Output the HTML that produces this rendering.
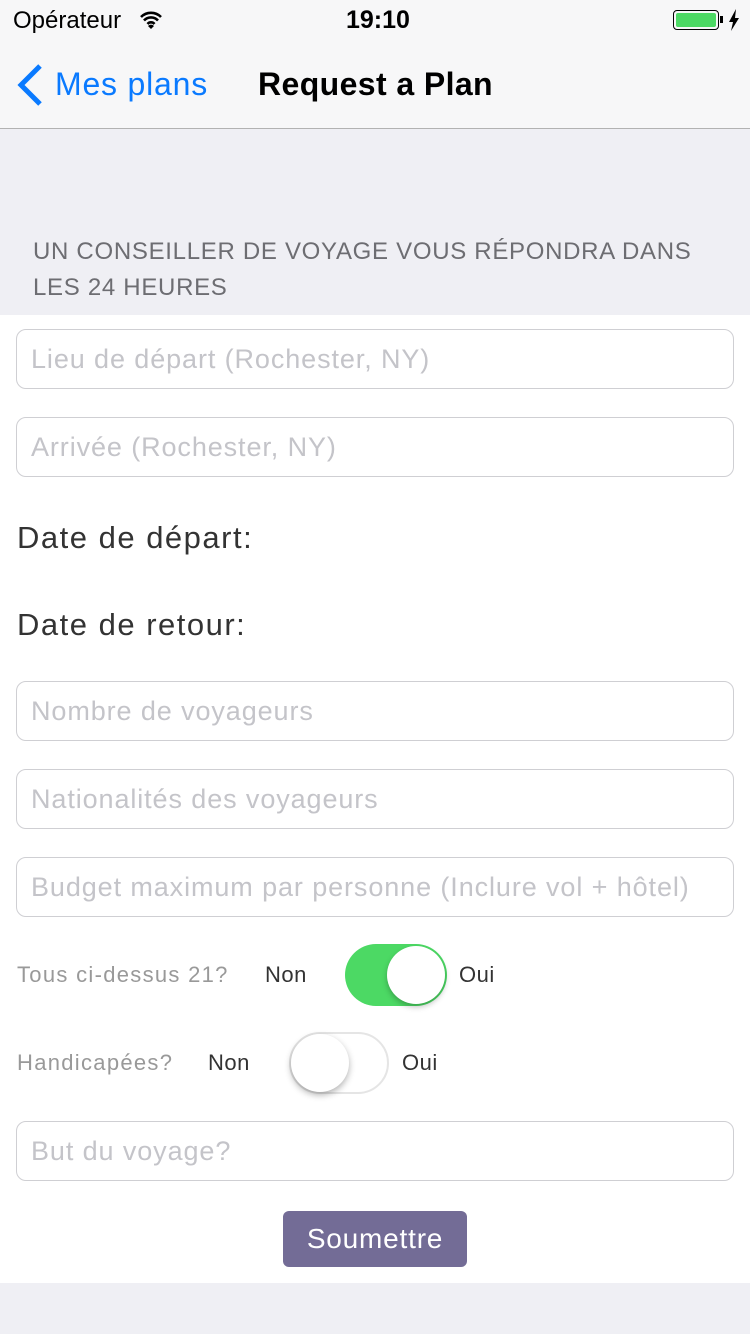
<html><head><style>
body{margin:0;width:750px;height:1334px;background:#efeff4;font-family:"Liberation Sans",sans-serif;position:relative;overflow:hidden}
.a{position:absolute;white-space:nowrap}
.in{position:absolute;left:16px;height:58px;border:1px solid #cfcfd3;border-radius:10px;background:#fff;font-size:27px;letter-spacing:0.9px;color:#c4c4c9;line-height:58px;box-sizing:content-box;padding-left:14px;width:702px}
.lbl{font-size:31px;letter-spacing:1.5px;color:#333}
.sm{font-size:22px;color:#333;letter-spacing:0.5px}
.gl{font-size:22px;color:#999;letter-spacing:1.3px}
</style></head><body>
<div class="a" style="left:0;top:0;width:750px;height:128px;background:#f7f7f8;border-bottom:1px solid #b2b2b2"></div>
<div class="a" style="left:13px;top:7px;font-size:24px">Opérateur</div>
<svg class="a" style="left:139px;top:10px" width="24" height="20" viewBox="0 0 24 20"><path d="M2 7a14 14 0 0 1 20 0M5 10.5a9.5 9.5 0 0 1 14 0M8.5 14a4.5 4.5 0 0 1 7 0" stroke="#000" stroke-width="2.6" fill="none"/><path d="M12 19l-3-3a4 4 0 0 1 6 0z"/></svg>
<div class="a" style="left:346px;top:6px;font-size:25px;font-weight:bold">19:10</div>
<div class="a" style="left:673px;top:10px;width:44px;height:18px;border:1.5px solid #000;border-radius:4px"><div style="margin:2px;height:14px;background:#4cd964;border-radius:2px"></div></div>
<div class="a" style="left:720px;top:16px;width:3px;height:7px;background:#000"></div>
<svg class="a" style="left:728px;top:9px" width="12" height="22" viewBox="0 0 12 22"><path d="M8 0L1 13h4l-2 9 8-13H7z"/></svg>
<svg class="a" style="left:16px;top:64px" width="28" height="42" viewBox="0 0 28 42"><path d="M24 2L5 21l19 19" stroke="#0a7aff" stroke-width="5" fill="none"/></svg>
<div class="a" style="left:55px;top:66px;font-size:32px;color:#0a7aff;letter-spacing:0.8px">Mes plans</div>
<div class="a" style="left:258px;top:66px;font-size:32px;font-weight:bold;letter-spacing:0.4px">Request a Plan</div>
<div class="a" style="left:33px;top:234px;font-size:24px;color:#6d6d72;line-height:36px;letter-spacing:0.7px">UN CONSEILLER DE VOYAGE VOUS RÉPONDRA DANS<br>LES 24 HEURES</div>
<div class="a" style="left:0;top:315px;width:750px;height:968px;background:#fff"></div>
<div class="in" style="top:329px">Lieu de départ (Rochester, NY)</div>
<div class="in" style="top:417px">Arrivée (Rochester, NY)</div>
<div class="a lbl" style="left:17px;top:520px">Date de départ:</div>
<div class="a lbl" style="left:17px;top:607px">Date de retour:</div>
<div class="in" style="top:681px">Nombre de voyageurs</div>
<div class="in" style="top:769px">Nationalités des voyageurs</div>
<div class="in" style="top:857px">Budget maximum par personne (Inclure vol + hôtel)</div>
<div class="a gl" style="left:17px;top:962px">Tous ci-dessus 21?</div>
<div class="a sm" style="left:265px;top:962px">Non</div>
<div class="a" style="left:345px;top:944px;width:102px;height:62px;border-radius:31px;background:#4cd964"><div style="position:absolute;left:42px;top:2px;width:58px;height:58px;border-radius:50%;background:#fff;box-shadow:0 3px 6px rgba(0,0,0,.25)"></div></div>
<div class="a sm" style="left:459px;top:962px">Oui</div>
<div class="a gl" style="left:17px;top:1050px">Handicapées?</div>
<div class="a sm" style="left:208px;top:1050px">Non</div>
<div class="a" style="left:289px;top:1032px;width:96px;height:58px;border-radius:31px;border:2px solid #e5e5e5;background:#fff"><div style="position:absolute;left:0;top:0;width:58px;height:58px;border-radius:50%;background:#fff;box-shadow:0 3px 7px rgba(0,0,0,.3)"></div></div>
<div class="a sm" style="left:402px;top:1050px">Oui</div>
<div class="in" style="top:1121px">But du voyage?</div>
<div class="a" style="left:283px;top:1211px;width:184px;height:56px;border-radius:6px;background:#736c96;color:#fff;font-size:28px;letter-spacing:0.8px;text-align:center;line-height:56px">Soumettre</div>
</body></html>
